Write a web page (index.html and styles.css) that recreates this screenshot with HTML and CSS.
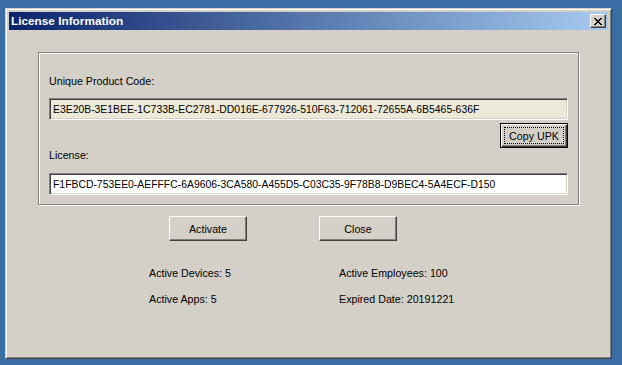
FILE: index.html
```html
<!DOCTYPE html>
<html lang="en">
<head>
    <meta charset="UTF-8">
    <title>License Information</title>
    <link rel="stylesheet" href="styles.css">
</head>
<body>
    <div class="window">
        <div class="title-bar">
            <span class="title">License Information</span>
            <button class="close-btn" title="Close">
                <svg width="8" height="7" viewBox="0 0 8 7" shape-rendering="crispEdges">
                    <path d="M0 0h2v1H0zM6 0h2v1H6zM1 1h2v1H1zM5 1h2v1H5zM2 2h4v1H2zM3 3h2v1H3zM2 4h4v1H2zM1 5h2v1H1zM5 5h2v1H5zM0 6h2v1H0zM6 6h2v1H6z" fill="#000"/>
                </svg>
            </button>
        </div>

        <div class="content">
            <div class="group">
                <div class="label">Unique Product Code:</div>
                <div class="textbox readonly">E3E20B-3E1BEE-1C733B-EC2781-DD016E-677926-510F63-712061-72655A-6B5465-636F</div>
                <div class="copy-row">
                    <button class="btn default">Copy UPK</button>
                </div>
                <div class="label license-label">License:</div>
                <div class="textbox license-box">F1FBCD-753EE0-AEFFFC-6A9606-3CA580-A455D5-C03C35-9F78B8-D9BEC4-5A4ECF-D150</div>
            </div>

            <div class="actions">
                <button class="btn">Activate</button>
                <button class="btn">Close</button>
            </div>

            <div class="stats">
                <span>Active Devices: 5</span>
                <span>Active Employees: 100</span>
                <span>Active Apps: 5</span>
                <span>Expired Date: 20191221</span>
            </div>
        </div>
    </div>
</body>
</html>
```

FILE: styles.css
```css
body {
    margin: 0;
    background-color: #3a6ea5;
    font-family: 'Liberation Sans', Arial, sans-serif;
    font-size: 10.7px;
    line-height: 13px;
    color: #000000;
}

.window {
    width: 607px;
    height: 351px;
    margin: 8px 0 0 5px;
    box-sizing: border-box;
    padding: 3px;
    background: #d4d0c8;
    border: 1px solid;
    border-color: #d4d0c8 #404040 #404040 #d4d0c8;
    box-shadow: inset 1px 1px 0 #ffffff, inset -1px -1px 0 #808080;
}

.title-bar {
    height: 18px;
    display: flex;
    align-items: center;
    justify-content: space-between;
    padding: 0 2px;
    background: linear-gradient(to right, #0a246a, #a6caf0);
}

.title-bar .title {
    color: #ffffff;
    font-weight: bold;
    font-size: 11.8px;
}

.close-btn {
    width: 16px;
    height: 14px;
    padding: 0;
    box-sizing: border-box;
    display: flex;
    align-items: center;
    justify-content: center;
    background: #d4d0c8;
    border: 1px solid;
    border-color: #ffffff #404040 #404040 #ffffff;
    box-shadow: inset -1px -1px 0 #808080;
}

.content {
    padding-top: 22px;
}

.group {
    margin: 0 29px;
    padding: 22px 10px 9px 10px;
    border: 1px solid #808080;
    box-shadow: 1px 1px 0 #ffffff, inset 1px 1px 0 #ffffff;
}

.label {
    height: 13px;
}

.textbox {
    height: 22px;
    box-sizing: border-box;
    margin-top: 10px;
    padding: 0 3px;
    display: flex;
    align-items: center;
    font-size: 10.4px;
    background: #ffffff;
    border: 1px solid;
    border-color: #808080 #ffffff #ffffff #808080;
    box-shadow: inset 1px 1px 0 #404040, inset -1px -1px 0 #d4d0c8;
    white-space: nowrap;
    overflow: hidden;
}

.textbox.readonly {
    background: #ece9d8;
}

.copy-row {
    display: flex;
    justify-content: flex-end;
    margin-top: 3px;
}

.license-label {
    margin-top: 1px;
}

.license-box {
    margin-top: 11px;
}

.btn {
    width: 78px;
    height: 25px;
    padding: 0;
    box-sizing: border-box;
    font-family: inherit;
    font-size: 10.7px;
    color: #000000;
    background: #d4d0c8;
    border: 1px solid;
    border-color: #ffffff #404040 #404040 #ffffff;
    box-shadow: inset -1px -1px 0 #808080;
}

.btn.default {
    position: relative;
    width: 68px;
    border-color: #000000;
    box-shadow: inset 1px 1px 0 #ffffff, inset -1px -1px 0 #404040, inset -2px -2px 0 #808080;
}

.btn.default::after {
    content: '';
    position: absolute;
    top: 3px;
    left: 3px;
    right: 3px;
    bottom: 3px;
    border: 1px dotted #000000;
}

.actions {
    display: flex;
    gap: 72px;
    margin-top: 11px;
    padding-left: 160px;
}

.stats {
    display: grid;
    grid-template-columns: 190px auto;
    row-gap: 13px;
    margin-top: 26px;
    padding-left: 140px;
}
```
